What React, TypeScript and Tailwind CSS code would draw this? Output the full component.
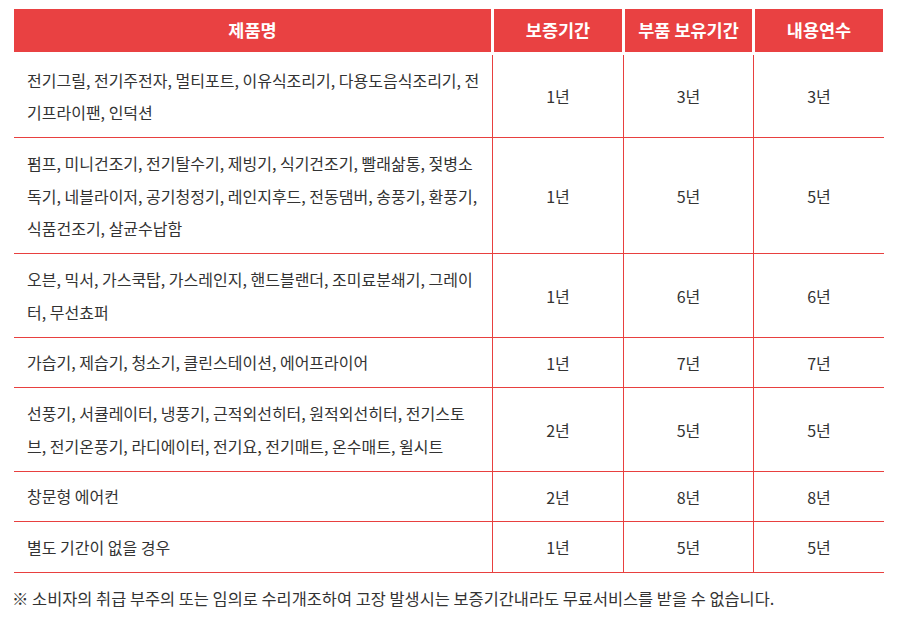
import React from "react";

const rows: { name: string; w: string; p: string; l: string }[] = [
  { name: "전기그릴, 전기주전자, 멀티포트, 이유식조리기, 다용도음식조리기, 전기프라이팬, 인덕션", w: "1년", p: "3년", l: "3년" },
  { name: "펌프, 미니건조기, 전기탈수기, 제빙기, 식기건조기, 빨래삶통, 젖병소독기, 네블라이저, 공기청정기, 레인지후드, 전동댐버, 송풍기, 환풍기, 식품건조기, 살균수납함", w: "1년", p: "5년", l: "5년" },
  { name: "오븐, 믹서, 가스쿡탑, 가스레인지, 핸드블랜더, 조미료분쇄기, 그레이터, 무선쵸퍼", w: "1년", p: "6년", l: "6년" },
  { name: "가습기, 제습기, 청소기, 클린스테이션, 에어프라이어", w: "1년", p: "7년", l: "7년" },
  { name: "선풍기, 서큘레이터, 냉풍기, 근적외선히터, 원적외선히터, 전기스토브, 전기온풍기, 라디에이터, 전기요, 전기매트, 온수매트, 윌시트", w: "2년", p: "5년", l: "5년" },
  { name: "창문형 에어컨", w: "2년", p: "8년", l: "8년" },
  { name: "별도 기간이 없을 경우", w: "1년", p: "5년", l: "5년" },
];

export default function App() {
  return (
    <div
      className="w-[900px] h-[623px] bg-white text-[#333333]"
      style={{ fontFamily: '"Noto Sans CJK KR", "Noto Sans", sans-serif' }}
    >
      <div className="pt-[9px] pl-[14px]">
        <div className="w-[870px]">
          <div className="grid grid-cols-[478px_131px_130px_131px] h-[43px] text-white font-bold text-[17.5px]">
            <div className="bg-[#e94142] mr-[1px] flex items-center justify-center">제품명</div>
            <div className="bg-[#e94142] ml-[2px] mr-[1px] flex items-center justify-center">보증기간</div>
            <div className="bg-[#e94142] ml-[2px] mr-[1px] flex items-center justify-center whitespace-nowrap">부품 보유기간</div>
            <div className="bg-[#e94142] ml-[2px] mr-[1px] flex items-center justify-center">내용연수</div>
          </div>
          <div className="mt-[3px] text-[16px]">
            {rows.map((r, i) => (
              <div key={i} className="grid grid-cols-[478px_131px_130px_131px] border-b border-[#e8403f]">
                <div className="pl-[13px] pr-[11px] py-[8.5px] leading-[32.67px] break-all">{r.name}</div>
                <div className="border-l border-[#e8403f] flex items-center justify-center">{r.w}</div>
                <div className="border-l border-[#e8403f] flex items-center justify-center">{r.p}</div>
                <div className="border-l border-[#e8403f] flex items-center justify-center">{r.l}</div>
              </div>
            ))}
          </div>
        </div>
      </div>
      <p className="ml-[12px] mt-[13px] text-[16.4px] leading-[24px] whitespace-nowrap">
        ※ 소비자의 취급 부주의 또는 임의로 수리개조하여 고장 발생시는 보증기간내라도 무료서비스를 받을 수 없습니다.
      </p>
    </div>
  );
}
